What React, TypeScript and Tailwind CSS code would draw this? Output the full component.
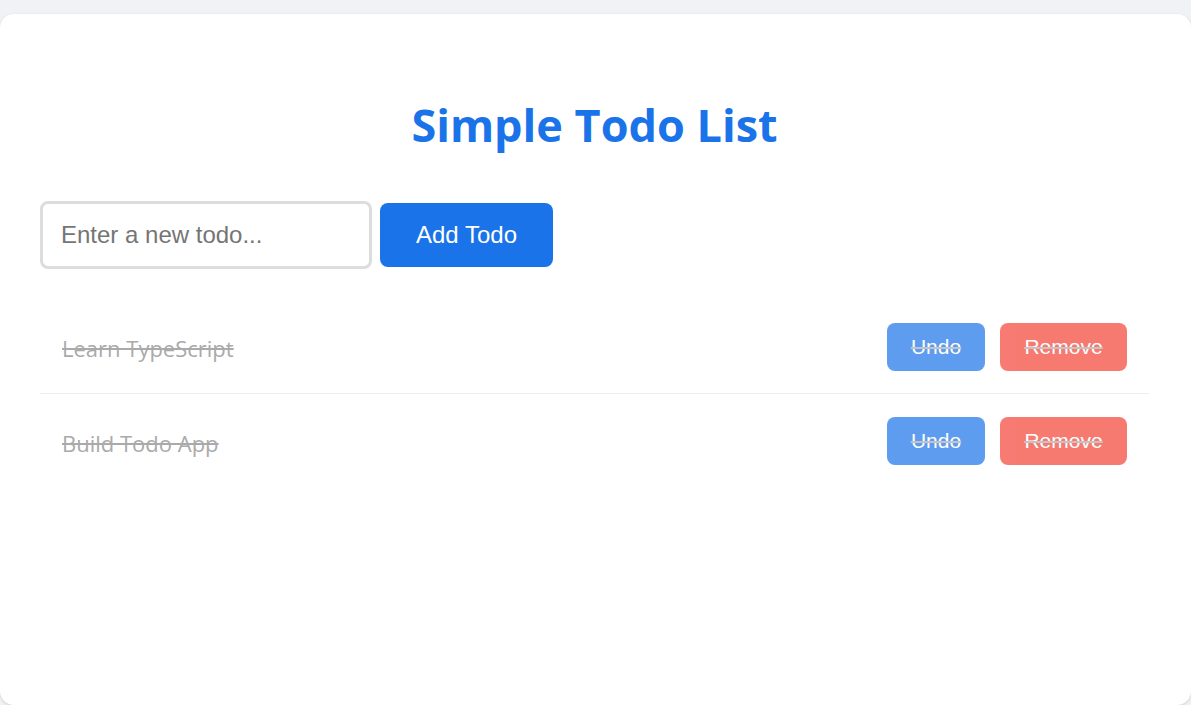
import React, { useState } from 'react';

interface Todo {
  id: number;
  text: string;
  done: boolean;
}

const App: React.FC = () => {
  const [todos, setTodos] = useState<Todo[]>([
    { id: 1, text: 'Learn TypeScript', done: true },
    { id: 2, text: 'Build Todo App', done: true },
  ]);
  const [draft, setDraft] = useState('');

  const add = () => {
    if (!draft.trim()) return;
    setTodos([...todos, { id: Date.now(), text: draft.trim(), done: false }]);
    setDraft('');
  };

  return (
    <div className="min-h-screen bg-[#f0f2f5] pt-[14px] font-['Open_Sans',sans-serif]">
      <div className="h-[691px] bg-white rounded-[14px] shadow-[0_1px_3px_rgba(0,0,0,0.15)] pl-10 pr-[42px]">
        <h1 className="pt-[81px] pb-[46px] text-center text-[45px] leading-[60px] font-bold text-[#1a73e8]">
          Simple Todo List
        </h1>

        <div className="flex items-center gap-2">
          <input
            value={draft}
            onChange={(e) => setDraft(e.target.value)}
            placeholder="Enter a new todo..."
            className="w-[332px] h-[68px] border-[3px] border-[#dddddd] rounded-lg px-[18px] text-[24px] font-['Liberation_Sans',Arial,sans-serif] placeholder:text-[#757575] outline-none"
          />
          <button
            onClick={add}
            className="w-[173px] h-16 rounded-lg bg-[#1a73e8] text-white text-[24px] font-['Liberation_Sans',Arial,sans-serif]"
          >
            Add Todo
          </button>
        </div>

        <ul className="mt-[31px]">
          {todos.map((t) => (
            <li
              key={t.id}
              className={`flex items-center justify-between h-[94px] pl-[22px] pr-[22px] border-b border-[#eeeeee] last:border-b-0 text-[22px] ${
                t.done ? 'line-through text-[#aaaaaa] decoration-[#aaaaaa]' : 'text-[#333333]'
              }`}
            >
              <span className="pt-1">{t.text}</span>
              <div className="flex gap-[15px]">
                <button
                  onClick={() => setTodos(todos.map((x) => (x.id === t.id ? { ...x, done: !x.done } : x)))}
                  className={`w-[98px] h-12 rounded-lg bg-[#1a73e8] text-white text-[21px] font-['Liberation_Sans',Arial,sans-serif] ${
                    t.done ? 'opacity-70 line-through decoration-[#aaaaaa]' : ''
                  }`}
                >
                  {t.done ? 'Undo' : 'Done'}
                </button>
                <button
                  onClick={() => setTodos(todos.filter((x) => x.id !== t.id))}
                  className={`w-[127px] h-12 rounded-lg bg-[#f44336] text-white text-[21px] font-['Liberation_Sans',Arial,sans-serif] ${
                    t.done ? 'opacity-70 line-through decoration-[#aaaaaa]' : ''
                  }`}
                >
                  Remove
                </button>
              </div>
            </li>
          ))}
        </ul>
      </div>
    </div>
  );
};

export default App;
